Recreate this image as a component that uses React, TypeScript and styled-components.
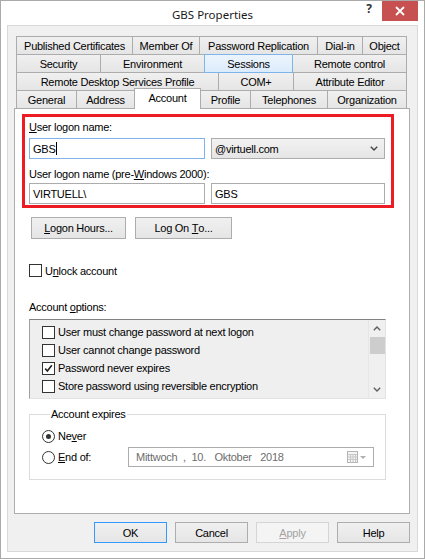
import React from "react";
import styled, { createGlobalStyle } from "styled-components";

const Global = createGlobalStyle`
  html, body { margin: 0; padding: 0; background: #fff; }
  body { font-family: "Liberation Sans", Arial, sans-serif; font-size: 11px; letter-spacing: -0.25px; color: #000; }
  * { box-sizing: border-box; }
`;

const Window = styled.div`
  width: 425px;
  height: 559px;
  border: 1px solid #aaaaaa;
  background: #ffffff;
  display: flex;
  flex-direction: column;
  padding: 0 6px 6px 6px;
`;

const TitleBar = styled.div`
  height: 24px;
  display: grid;
  grid-template-columns: 1fr auto 1fr;
  align-items: start;
`;

const Title = styled.div`
  font-family: "Noto Sans", "Open Sans", sans-serif;
  font-size: 11.5px;
  letter-spacing: 0;
  line-height: 16px;
  padding-top: 6px;
  color: #1a1a1a;
  white-space: nowrap;
`;

const Controls = styled.div`
  display: flex;
  justify-content: flex-end;
  align-items: flex-start;
`;

const HelpBtn = styled.div`
  width: 26px;
  height: 20px;
  font-family: "Noto Sans", sans-serif;
  font-weight: bold;
  font-size: 12px;
  line-height: 16px;
  text-align: center;
  color: #333;
`;

const CloseBtn = styled.div`
  width: 36px;
  height: 20px;
  background: #c75050;
  display: flex;
  align-items: center;
  justify-content: center;
`;

const Client = styled.div`
  flex: 1;
  border: 1px solid #d9d9d9;
  background: #f0f0f0;
  padding: 10px 7px 8px 6px;
  display: flex;
  flex-direction: column;
`;

const Tabs = styled.div`
  margin-left: 2px;
  width: 391px;
  display: flex;
  flex-direction: column;
`;

const TabRow = styled.div`
  height: 18px;
  display: flex;
  align-items: flex-start;
`;

const Tab = styled.div<{ $w: number; $state?: "sel" | "hover" }>`
  width: ${(p) => p.$w}px;
  height: ${(p) => (p.$state === "sel" ? 21 : 19)}px;
  margin-top: ${(p) => (p.$state === "sel" ? -2 : 0)}px;
  margin-left: -1px;
  &:first-child { margin-left: 0; }
  border: 1px solid ${(p) => (p.$state === "hover" ? "#7eb4ea" : "#acacac")};
  border-bottom: ${(p) => (p.$state === "sel" ? "none" : undefined)};
  background: ${(p) =>
    p.$state === "sel"
      ? "#ffffff"
      : p.$state === "hover"
      ? "linear-gradient(#ecf4fc, #dcecfc)"
      : "linear-gradient(#f0f0f0, #e5e5e5)"};
  position: relative;
  z-index: ${(p) => (p.$state === "sel" ? 2 : p.$state === "hover" ? 1 : 0)};
  display: flex;
  align-items: center;
  justify-content: center;
  padding-bottom: ${(p) => (p.$state === "sel" ? 2 : 0)}px;
  white-space: nowrap;
`;

const Panel = styled.div`
  width: 396px;
  height: 406px;
  border: 1px solid #adadad;
  background: #ffffff;
  display: flex;
  flex-direction: column;
  padding: 5px 0 0 14px;
`;

const RedBox = styled.div`
  margin-left: -7px;
  width: 372px;
  height: 94px;
  border: 3px solid #ed1c24;
  padding: 4px 6px 0 4px;
  display: flex;
  flex-direction: column;
`;

const Label = styled.div<{ $mt?: number }>`
  line-height: 13px;
  height: 13px;
  margin-top: ${(p) => p.$mt ?? 0}px;
  white-space: nowrap;
`;

const FieldRow = styled.div<{ $mt: number }>`
  display: flex;
  gap: 6px;
  margin-top: ${(p) => p.$mt}px;
`;

const TextInput = styled.div<{ $focus?: boolean; $w?: number }>`
  width: ${(p) => p.$w ?? 177}px;
  height: 21px;
  border: 1px solid ${(p) => (p.$focus ? "#7eb4ea" : "#acacac")};
  background: #fff;
  display: flex;
  align-items: center;
  padding-left: 3px;
  white-space: pre;
`;

const Caret = styled.span`
  display: inline-block;
  width: 1px;
  height: 13px;
  background: #000;
  margin-left: 1px;
`;

const Select = styled.div`
  width: 175px;
  height: 21px;
  border: 1px solid #acacac;
  background: linear-gradient(#f2f2f2, #e5e5e5);
  display: flex;
  align-items: center;
  justify-content: space-between;
  padding: 0 6px 0 3px;
`;

const ButtonRow = styled.div<{ $mt: number; $ml: number; $gap: number }>`
  display: flex;
  gap: ${(p) => p.$gap}px;
  margin-top: ${(p) => p.$mt}px;
  margin-left: ${(p) => p.$ml}px;
`;

const Button = styled.div<{ $w: number; $h?: number; $default?: boolean; $disabled?: boolean }>`
  width: ${(p) => p.$w}px;
  height: ${(p) => p.$h ?? 22}px;
  border: 1px solid ${(p) => (p.$default ? "#3399ff" : p.$disabled ? "#d5d5d5" : "#adadad")};
  background: ${(p) => (p.$disabled ? "#f4f4f4" : "linear-gradient(#f0f0f0, #e5e5e5)")};
  color: ${(p) => (p.$disabled ? "#a3a3a3" : "#000")};
  display: flex;
  align-items: center;
  justify-content: center;
  white-space: pre;
`;

const Acc = styled.span`
  text-decoration: underline;
`;

const CheckRow = styled.div<{ $mt?: number; $h?: number }>`
  display: flex;
  align-items: center;
  gap: 3px;
  height: ${(p) => p.$h ?? 13}px;
  margin-top: ${(p) => p.$mt ?? 0}px;
  white-space: nowrap;
`;

const Box = styled.div`
  width: 13px;
  height: 13px;
  border: 1px solid #333333;
  background: #fff;
  display: flex;
  align-items: center;
  justify-content: center;
  flex: none;
`;

const Radio = styled.div<{ $on?: boolean }>`
  width: 13px;
  height: 13px;
  border: 1px solid #333333;
  border-radius: 50%;
  background: #fff;
  display: flex;
  align-items: center;
  justify-content: center;
  flex: none;
  &::after {
    content: "";
    width: 5px;
    height: 5px;
    border-radius: 50%;
    background: ${(p) => (p.$on ? "#333" : "transparent")};
  }
`;

const OptionsList = styled.div`
  margin-top: 5px;
  width: 357px;
  height: 80px;
  border: 1px solid;
  border-color: #828282 #e3e3e3 #e3e3e3 #a0a0a0;
  background: #efefef;
  display: flex;
`;

const OptionRows = styled.div`
  flex: 1;
  padding: 3px 0 0 12px;
  display: flex;
  flex-direction: column;
`;

const Scrollbar = styled.div`
  width: 17px;
  background: #f0f0f0;
  border-left: 1px solid #e6e6e6;
  display: flex;
  flex-direction: column;
  align-items: center;
`;

const ScrollArrow = styled.div`
  width: 16px;
  height: 17px;
  display: flex;
  align-items: center;
  justify-content: center;
`;

const Thumb = styled.div`
  width: 15px;
  height: 17px;
  background: #cdcdcd;
`;

const ScrollTrack = styled.div`
  flex: 1;
`;

const Group = styled.fieldset`
  margin: 9px 0 0 0;
  width: 357px;
  height: 72px;
  border: 1px solid #dcdcdc;
  padding: 8px 0 0 12px;
  min-width: 0;
  display: flex;
  flex-direction: column;
`;

const Legend = styled.legend`
  margin-left: 8px;
  padding: 0 1px;
  line-height: 13px;
  font-size: 11px;
`;

const RadioRow = styled.div<{ $mt?: number }>`
  display: grid;
  grid-template-columns: 86px auto;
  align-items: center;
  margin-top: ${(p) => p.$mt ?? 0}px;
`;

const RadioLabel = styled.div`
  display: flex;
  align-items: center;
  gap: 3px;
  height: 14px;
`;

const DatePicker = styled.div`
  width: 246px;
  height: 20px;
  border: 1px solid #acacac;
  background: #fff;
  color: #6d6d6d;
  display: flex;
  align-items: center;
  padding: 0 6px 0 7px;
  white-space: pre;
`;

const DateText = styled.span`
  flex: 1;
`;

const Footer = styled.div`
  margin-top: 8px;
  display: flex;
  justify-content: flex-end;
  gap: 8px;
`;

const Check = () => (
  <svg width="9" height="9" viewBox="0 0 9 9">
    <path d="M1.2 4.6 L3.4 7 L7.8 1.2" fill="none" stroke="#222" strokeWidth="1.6" />
  </svg>
);

const Chevron = ({ up, color = "#555" }: { up?: boolean; color?: string }) => (
  <svg width="8" height="5" viewBox="0 0 8 5">
    <path
      d={up ? "M0.8 4.2 L4 1 L7.2 4.2" : "M0.8 0.8 L4 4 L7.2 0.8"}
      fill="none"
      stroke={color}
      strokeWidth="1.4"
    />
  </svg>
);

const CalendarIcon = () => (
  <svg width="20" height="12" viewBox="0 0 20 12">
    <rect x="0.5" y="0.5" width="10" height="11" fill="#f4f4f4" stroke="#b5b5b5" />
    <path d="M1 3.5 H10 M1 6 H10 M1 8.5 H10 M3.5 3 V11 M6 3 V11 M8.5 3 V11" stroke="#c8c8c8" strokeWidth="1" />
    <path d="M13 5 L19 5 L16 8 Z" fill="#b0b0b0" />
  </svg>
);

const tabRows: { label: string; w: number; state?: "sel" | "hover" }[][] = [
  [
    { label: "Published Certificates", w: 117 },
    { label: "Member Of", w: 68 },
    { label: "Password Replication", w: 119 },
    { label: "Dial-in", w: 46 },
    { label: "Object", w: 45 },
  ],
  [
    { label: "Security", w: 85 },
    { label: "Environment", w: 105 },
    { label: "Sessions", w: 89, state: "hover" },
    { label: "Remote control", w: 115 },
  ],
  [
    { label: "Remote Desktop Services Profile", w: 203 },
    { label: "COM+", w: 76 },
    { label: "Attribute Editor", w: 114 },
  ],
  [
    { label: "General", w: 61 },
    { label: "Address", w: 59 },
    { label: "Account", w: 67, state: "sel" },
    { label: "Profile", w: 51 },
    { label: "Telephones", w: 78 },
    { label: "Organization", w: 80 },
  ],
];

const options = [
  { label: "User must change password at next logon", on: false },
  { label: "User cannot change password", on: false },
  { label: "Password never expires", on: true },
  { label: "Store password using reversible encryption", on: false },
];

export default function App() {
  return (
    <>
      <Global />
      <Window>
        <TitleBar>
          <div />
          <Title>GBS Properties</Title>
          <Controls>
            <HelpBtn>?</HelpBtn>
            <CloseBtn>
              <svg width="10" height="10" viewBox="0 0 10 10">
                <path d="M1 1 L9 9 M9 1 L1 9" stroke="#fff" strokeWidth="1.8" />
              </svg>
            </CloseBtn>
          </Controls>
        </TitleBar>
        <Client>
          <Tabs>
            {tabRows.map((row, i) => (
              <TabRow key={i}>
                {row.map((t) => (
                  <Tab key={t.label} $w={t.w} $state={t.state}>
                    {t.label}
                  </Tab>
                ))}
              </TabRow>
            ))}
          </Tabs>
          <Panel>
            <RedBox>
              <Label>
                <Acc>U</Acc>ser logon name:
              </Label>
              <FieldRow $mt={4}>
                <TextInput $focus>
                  GBS
                  <Caret />
                </TextInput>
                <Select>
                  <span>@virtuell.com</span>
                  <Chevron color="#444" />
                </Select>
              </FieldRow>
              <Label $mt={9}>
                {"User logon name (pre-"}
                <Acc>W</Acc>
                {"indows 2000):"}
              </Label>
              <FieldRow $mt={2}>
                <TextInput>VIRTUELL\</TextInput>
                <TextInput $w={175}>GBS</TextInput>
              </FieldRow>
            </RedBox>
            <ButtonRow $mt={9} $ml={2} $gap={9}>
              <Button $w={95}>
                <Acc>L</Acc>
                {"ogon Hours..."}
              </Button>
              <Button $w={97}>
                {"Log On "}
                <Acc>T</Acc>
                {"o..."}
              </Button>
            </ButtonRow>
            <CheckRow $mt={25}>
              <Box />
              <span>
                U<Acc>n</Acc>lock account
              </span>
            </CheckRow>
            <Label $mt={24}>
              {"Account "}
              <Acc>o</Acc>
              {"ptions:"}
            </Label>
            <OptionsList>
              <OptionRows>
                {options.map((o) => (
                  <CheckRow key={o.label} $h={18}>
                    <Box>{o.on && <Check />}</Box>
                    <span>{o.label}</span>
                  </CheckRow>
                ))}
              </OptionRows>
              <Scrollbar>
                <ScrollArrow>
                  <Chevron up color="#606060" />
                </ScrollArrow>
                <Thumb />
                <ScrollTrack />
                <ScrollArrow>
                  <Chevron color="#606060" />
                </ScrollArrow>
              </Scrollbar>
            </OptionsList>
            <Group>
              <Legend>Account expires</Legend>
              <RadioRow>
                <RadioLabel>
                  <Radio $on />
                  <span>
                    Ne<Acc>v</Acc>er
                  </span>
                </RadioLabel>
              </RadioRow>
              <RadioRow $mt={4}>
                <RadioLabel>
                  <Radio />
                  <span>
                    <Acc>E</Acc>nd of:
                  </span>
                </RadioLabel>
                <DatePicker>
                  <DateText>{"Mittwoch  ,  10.   Oktober   2018"}</DateText>
                  <CalendarIcon />
                </DatePicker>
              </RadioRow>
            </Group>
          </Panel>
          <Footer>
            <Button $w={73} $h={21} $default>
              OK
            </Button>
            <Button $w={73} $h={21}>
              Cancel
            </Button>
            <Button $w={73} $h={21} $disabled>
              <Acc>A</Acc>
              {"pply"}
            </Button>
            <Button $w={73} $h={21}>
              Help
            </Button>
          </Footer>
        </Client>
      </Window>
    </>
  );
}
